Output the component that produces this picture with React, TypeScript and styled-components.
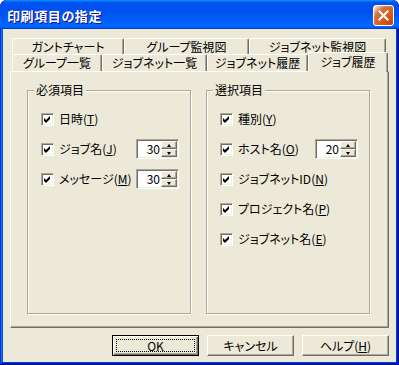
import React from "react";
import styled, { createGlobalStyle } from "styled-components";

const FACE = "#ECE9D8";
const SHADOW = "#ACA899";
const DARK = "#716F64";

const GlobalStyle = createGlobalStyle`
  html, body {
    margin: 0;
    padding: 0;
    background: #fff;
  }
  body {
    font-family: "Noto Sans CJK JP", "Noto Sans", sans-serif;
    font-size: 12px;
    color: #000;
    font-feature-settings: "palt" 1;
  }
`;

const Window = styled.div`
  width: 399px;
  height: 365px;
  box-sizing: border-box;
  display: flex;
  flex-direction: column;
  background: #0855dd;
  border-radius: 7px 7px 0 0;
  overflow: hidden;
  box-shadow: inset -1px -1px #00138c, inset 1px 1px #0831d9,
    inset -2px -2px #001ea0, inset 2px 2px #166aee, inset -3px -3px #003bda,
    inset 3px 3px #0855dd;
`;

const TitleBar = styled.div`
  height: 29px;
  box-sizing: border-box;
  display: flex;
  align-items: flex-start;
  justify-content: space-between;
  padding: 5px 5px 0 7px;
  background: linear-gradient(
    180deg,
    #0997ff,
    #0053ee 8%,
    #0050ee 40%,
    #0066ff 88%,
    #0066ff 93%,
    #005bff 95%,
    #003dd7 96%,
    #003dd7
  );
  border-radius: 7px 7px 0 0;
`;

const TitleText = styled.div`
  font-size: 13px;
  font-weight: bold;
  line-height: 21px;
  letter-spacing: 0.6px;
  color: #fff;
  text-shadow: 1px 1px #0f1089;
`;

const CloseButton = styled.div`
  width: 21px;
  height: 21px;
  box-sizing: border-box;
  border: 1px solid #fff;
  border-radius: 3px;
  display: flex;
  align-items: center;
  justify-content: center;
  background: radial-gradient(
    circle at 90% 90%,
    #cc4600 0%,
    #dc6527 55%,
    #cd7546 70%,
    #ffccb2 90%,
    #fff 100%
  );
`;

const Body = styled.div`
  flex: 1;
  margin: 0 3px 3px;
  background: ${FACE};
  padding: 9px 7px 6px;
  display: flex;
  flex-direction: column;
`;

const TabStrip = styled.div`
  position: relative;
  z-index: 1;
  padding-left: 2px;
  display: flex;
  flex-direction: column;
`;

const TabRow = styled.div<{ $h: number }>`
  display: flex;
  height: ${(p) => p.$h}px;
`;

const Tab = styled.div<{ $w: number; $active?: boolean }>`
  width: ${(p) => p.$w}px;
  height: ${(p) => (p.$active ? "20px" : "100%")};
  margin-top: ${(p) => (p.$active ? "-2px" : "0")};
  box-sizing: border-box;
  display: flex;
  align-items: center;
  justify-content: center;
  white-space: nowrap;
  line-height: 14px;
  background: ${FACE};
  border-top: 1px solid #fff;
  border-left: 1px solid #fff;
  border-right: 1px solid ${DARK};
  border-radius: 2px 2px 0 0;
  box-shadow: inset -1px 0 ${SHADOW};
  padding-bottom: ${(p) => (p.$active ? "2px" : "0")};
`;

const Panel = styled.div`
  height: 257px;
  box-sizing: border-box;
  display: flex;
  gap: 15px;
  padding: 18px 18px 13px 16px;
  background: ${FACE};
  border-top: 1px solid #fff;
  border-left: 1px solid #fff;
  border-right: 1px solid ${DARK};
  border-bottom: 1px solid ${DARK};
  box-shadow: inset -1px -1px ${SHADOW};
`;

const GroupBox = styled.div`
  position: relative;
  flex: 0 0 164px;
  box-sizing: border-box;
  border: 1px solid ${SHADOW};
  box-shadow: inset 1px 1px #fff, 1px 1px #fff;
  padding: 13px 11px 0 13px;
  display: flex;
  flex-direction: column;
`;

const Legend = styled.span`
  position: absolute;
  top: -8px;
  left: 6px;
  padding: 0 2px;
  line-height: 14px;
  background: ${FACE};
`;

const Row = styled.div`
  height: 30px;
  display: flex;
  align-items: center;
`;

const CheckBox = styled.div`
  width: 13px;
  height: 13px;
  flex: 0 0 13px;
  box-sizing: border-box;
  background: #fff;
  border: 1px solid;
  border-color: ${SHADOW} #fff #fff ${SHADOW};
  box-shadow: inset 1px 1px ${DARK}, inset -1px -1px #f1efe2;
  display: flex;
  align-items: center;
  justify-content: center;
`;

const Label = styled.span`
  margin-left: 5px;
  line-height: 14px;
  white-space: nowrap;
`;

const Mn = styled.span`
  text-decoration: underline;
  text-underline-offset: 1px;
`;

const Spinner = styled.div`
  margin-left: auto;
  width: 43px;
  height: 20px;
  box-sizing: border-box;
  padding: 1px;
  display: flex;
  background: #fff;
  border: 1px solid;
  border-color: ${SHADOW} #fff #fff ${SHADOW};
  box-shadow: inset 1px 1px ${DARK}, inset -1px -1px #f1efe2;
`;

const SpinValue = styled.div`
  flex: 1;
  text-align: right;
  padding-right: 1px;
  line-height: 16px;
`;

const SpinButtons = styled.div`
  width: 16px;
  display: flex;
  flex-direction: column;
`;

const SpinButton = styled.div`
  height: 8px;
  box-sizing: border-box;
  background: ${FACE};
  border: 1px solid;
  border-color: #fff ${DARK} ${DARK} #fff;
  box-shadow: inset -1px -1px ${SHADOW};
  display: flex;
  align-items: center;
  justify-content: center;
`;

const Arrow = styled.span<{ $down?: boolean }>`
  width: 0;
  height: 0;
  border-left: 2.5px solid transparent;
  border-right: 2.5px solid transparent;
  ${(p) =>
    p.$down ? "border-top: 3px solid #000;" : "border-bottom: 3px solid #000;"}
`;

const ButtonRow = styled.div`
  margin-top: 7px;
  display: flex;
  justify-content: flex-end;
  gap: 8px;
`;

const Button = styled.button<{ $default?: boolean }>`
  position: relative;
  width: 87px;
  height: 21px;
  box-sizing: border-box;
  padding: 0;
  font: inherit;
  line-height: 14px;
  color: #000;
  background: ${FACE};
  border: 1px solid;
  border-color: ${(p) => (p.$default ? "#000" : `#fff ${DARK} ${DARK} #fff`)};
  box-shadow: ${(p) =>
    p.$default
      ? `inset 1px 1px #fff, inset -1px -1px ${DARK}, inset -2px -2px ${SHADOW}`
      : `inset -1px -1px ${SHADOW}`};

  ${(p) =>
    p.$default &&
    `&::after {
      content: "";
      position: absolute;
      inset: 3px;
      border: 1px dotted #000;
    }`}
`;

function Check() {
  return (
    <svg width="7" height="7" viewBox="0 0 7 7">
      <path d="M0 2 L2 4 L6 0 L6 3 L2 7 L0 5 Z" fill="#000" />
    </svg>
  );
}

type Item = { name: string; key: string; spin?: string };

const required: Item[] = [
  { name: "日時", key: "T" },
  { name: "ジョブ名", key: "J", spin: "30" },
  { name: "メッセージ", key: "M", spin: "30" },
];

const optional: Item[] = [
  { name: "種別", key: "Y" },
  { name: "ホスト名", key: "O", spin: "20" },
  { name: "ジョブネットID", key: "N" },
  { name: "プロジェクト名", key: "P" },
  { name: "ジョブネット名", key: "E" },
];

function Group({ title, items }: { title: string; items: Item[] }) {
  return (
    <GroupBox>
      <Legend>{title}</Legend>
      {items.map((it) => (
        <Row key={it.key}>
          <CheckBox>
            <Check />
          </CheckBox>
          <Label>
            {it.name}(<Mn>{it.key}</Mn>)
          </Label>
          {it.spin && (
            <Spinner>
              <SpinValue>{it.spin}</SpinValue>
              <SpinButtons>
                <SpinButton>
                  <Arrow />
                </SpinButton>
                <SpinButton>
                  <Arrow $down />
                </SpinButton>
              </SpinButtons>
            </Spinner>
          )}
        </Row>
      ))}
    </GroupBox>
  );
}

export default function App() {
  return (
    <>
      <GlobalStyle />
      <Window>
        <TitleBar>
          <TitleText>印刷項目の指定</TitleText>
          <CloseButton>
            <svg width="13" height="13" viewBox="0 0 13 13">
              <path
                d="M2.5 2.5 L10.5 10.5 M10.5 2.5 L2.5 10.5"
                stroke="#fff"
                strokeWidth="2.2"
                strokeLinecap="square"
              />
            </svg>
          </CloseButton>
        </TitleBar>
        <Body>
          <TabStrip>
            <TabRow $h={16}>
              <Tab $w={112}>ガントチャート</Tab>
              <Tab $w={125}>グループ監視図</Tab>
              <Tab $w={137}>ジョブネット監視図</Tab>
            </TabRow>
            <TabRow $h={17}>
              <Tab $w={90}>グループ一覧</Tab>
              <Tab $w={105}>ジョブネット一覧</Tab>
              <Tab $w={101}>ジョブネット履歴</Tab>
              <Tab $w={80} $active>
                ジョブ履歴
              </Tab>
            </TabRow>
          </TabStrip>
          <Panel>
            <Group title="必須項目" items={required} />
            <Group title="選択項目" items={optional} />
          </Panel>
          <ButtonRow>
            <Button $default>OK</Button>
            <Button>キャンセル</Button>
            <Button>
              ヘルプ(<Mn>H</Mn>)
            </Button>
          </ButtonRow>
        </Body>
      </Window>
    </>
  );
}
